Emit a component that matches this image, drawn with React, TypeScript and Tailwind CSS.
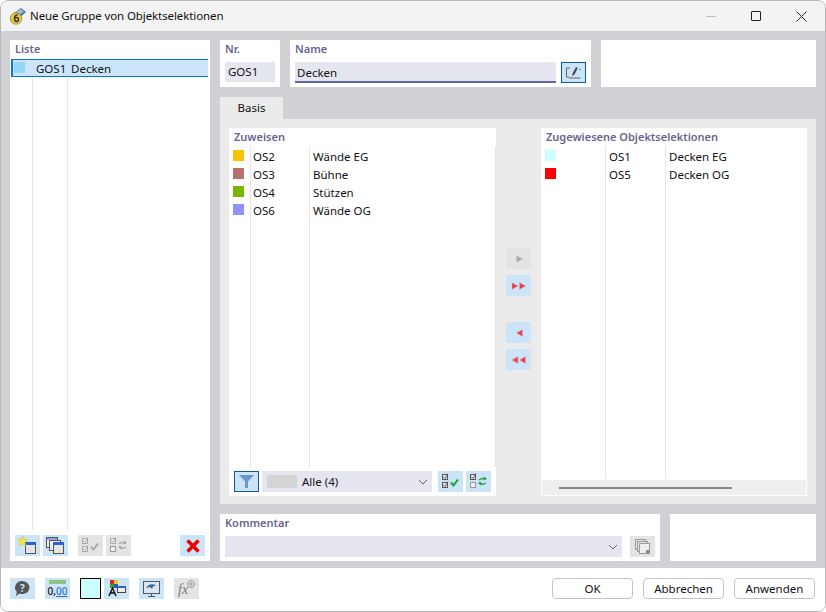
import { ReactNode } from "react";

const font = { fontFamily: '"Noto Sans", "Open Sans", sans-serif' };

function Label({ children }: { children: ReactNode }) {
  return <div className="h-[18px] pl-[5px] text-[11px] leading-[18px] font-semibold text-[#66668f]">{children}</div>;
}

function IconButton({ children, off, ring }: { children: ReactNode; off?: boolean; ring?: boolean }) {
  return (
    <div
      className={`flex h-[21px] w-[25px] shrink-0 items-center justify-center ${off ? "bg-[#e4e4e4]" : "bg-[#cbe4f8]"} ${ring ? "border border-[#0b5a9e]" : ""}`}
    >
      {children}
    </div>
  );
}

function Chevron() {
  return (
    <svg width="10" height="6" viewBox="0 0 10 6" className="shrink-0">
      <path d="M1 1l4 4 4-4" fill="none" stroke="#666" strokeWidth="1" />
    </svg>
  );
}

function WinIcon({ star, stack }: { star?: boolean; stack?: boolean }) {
  return (
    <svg width="21" height="19" viewBox="0 0 21 19">
      {stack && <rect x="1.500" y="1.500" width="11" height="10" fill="#eee" stroke="#555" />}
      {stack && <rect x="2" y="2" width="10" height="2" fill="#8fa8e0" />}
      {stack && <rect x="4.500" y="4.500" width="11" height="10" fill="#eee" stroke="#555" />}
      <rect x="8.500" y="6.500" width="10" height="11" fill="#e4e4e4" stroke="#555" />
      <rect x="8" y="6" width="11" height="3" fill="#2f5fd0" />
      {star && <path d="M5.500 0l1.500 3.400 3.700.3-2.800 2.400.9 3.600-3.300-2-3.300 2 .9-3.600L.300 3.700 4 3.400z" fill="#f5e83a" stroke="#c8b820" strokeWidth=".5" />}
    </svg>
  );
}

function CheckAll({ off }: { off?: boolean }) {
  const c = off ? "#aaa" : "#555";
  return (
    <svg width="21" height="19" viewBox="0 0 21 19">
      <rect x="2.500" y="2.500" width="5" height="5" fill="#f0f0f0" stroke={c} />
      <rect x="2.500" y="10.500" width="5" height="5" fill="#f0f0f0" stroke={c} />
      <path d="M3 4.500l2 2 3-5M3 12.500l2 2 3-5" fill="none" stroke={c} />
      <path d="M11 10.500l2.500 3 4.500-6" fill="none" stroke={off ? "#aaa" : "#13a538"} strokeWidth="2" />
    </svg>
  );
}

function CheckSwap({ off }: { off?: boolean }) {
  const c = off ? "#aaa" : "#555";
  const a = off ? "#aaa" : "#2aa53c";
  return (
    <svg width="21" height="19" viewBox="0 0 21 19">
      <rect x="2.500" y="2.500" width="5" height="5" fill="#f0f0f0" stroke={c} />
      <path d="M3 4.500l2 2 3-5" fill="none" stroke={c} />
      <rect x="2.500" y="10.500" width="5" height="5" fill="#f0f0f0" stroke="#999" />
      <path d="M11 8c2-2 4-2 7-1M18 11c-2 1.500-5 1.500-7 0" fill="none" stroke={a} strokeWidth="1.500" />
      <path d="M16 4.500l3 2.500-3.500 1.500zM13 13.500l-3-2.500 3.500-1.500z" fill={a} />
    </svg>
  );
}

function Arrows({ dir, n, off }: { dir: "r" | "l"; n: 1 | 2; off?: boolean }) {
  const col = off ? "#a8a8a8" : "#d9444f";
  const edge = off ? "#c4c4c4" : "#f2a6ac";
  const one = dir === "r" ? "M0.500 0.500l6 3.500-6 3.500z" : "M6.500 0.500L0.500 4l6 3.500z";
  return (
    <svg width="16" height="8" viewBox="0 0 16 8">
      {n === 1 ? (
        <path d={one} fill={col} stroke={edge} strokeWidth=".5" transform="translate(5 0)" />
      ) : (
        <>
          <path d={one} fill={col} stroke={edge} strokeWidth=".5" transform="translate(0.500 0)" />
          <path d={one} fill={col} stroke={edge} strokeWidth=".5" transform="translate(8 0)" />
        </>
      )}
    </svg>
  );
}

function Lines({ a, b }: { a: string; b: string }) {
  return (
    <>
      <div className={`pointer-events-none absolute top-0 bottom-0 w-px bg-[#e6e6e6] ${a}`} />
      <div className={`pointer-events-none absolute top-0 bottom-0 w-px bg-[#e6e6e6] ${b}`} />
    </>
  );
}

const toAssign = [
  ["#f8c400", "OS2", "Wände EG"],
  ["#b87070", "OS3", "Bühne"],
  ["#78b400", "OS4", "Stützen"],
  ["#9090ff", "OS6", "Wände OG"],
];

const assigned = [
  ["#ccffff", "OS1", "Decken EG"],
  ["#ff0000", "OS5", "Decken OG"],
];

export default function App() {
  return (
    <div style={font} className="h-[612px] w-[826px] overflow-hidden bg-white text-[11.5px] text-[#111]">
      <div className="flex h-full flex-col overflow-hidden rounded-lg border border-[#b8b8b8]">
        {/* title bar */}
        <div className="flex h-[30px] shrink-0 items-center bg-[#f3f3f3] pl-[8px]">
          <svg width="18" height="18" viewBox="0 0 18 18">
            <path d="M4 7l8-6 5 4-7 6z" fill="#3d6f9e" />
            <path d="M7 5l5-3 3 3-5 3z" fill="#9fc0d8" />
            <circle cx="7" cy="11.500" r="5.800" fill="#e8c53a" stroke="#8a7420" strokeWidth=".6" />
            <path d="M9 8c-2-.8-3.500 1-3.500 3.500 0 2 1 3 2 3s2-1 2-2-1-2-2-2-2 .5-2 1.500" fill="none" stroke="#333" strokeWidth="1.300" />
          </svg>
          <div className="ml-[3px] text-[11.5px] tracking-[-0.1px]">Neue Gruppe von Objektselektionen</div>
          <div className="ml-auto flex items-center">
            <div className="h-px w-[10px] bg-[#bdbdbd]" />
            <div className="ml-[35px] h-[10px] w-[10px] rounded-[1px] border border-[#222]" />
            <svg width="11" height="11" viewBox="0 0 11 11" className="mr-[18px] ml-[35px]">
              <path d="M.5.500l10 10M10.500.500l-10 10" stroke="#222" strokeWidth="1" />
            </svg>
          </div>
        </div>

        {/* body */}
        <div className="flex min-h-0 flex-1 gap-[10px] bg-[#d0d0d5] pt-[9px] pr-[9px] pb-[7px] pl-[9px]">
          {/* list */}
          <div className="flex w-[200px] shrink-0 flex-col bg-white">
            <Label>Liste</Label>
            <div className="relative mx-px min-h-0 flex-1 pt-px">
              <Lines a="left-[21px]" b="left-[56px]" />
              <div className="relative mr-px flex h-[18px] items-center border-y border-l-2 border-[#0a78d2] bg-[#cbe6fb] pt-px">
                <div className="ml-[1px] h-[11px] w-[11px] -translate-y-[1px] bg-[#93d6f8]" />
                <div className="ml-[11px] w-[35px]">GOS1</div>
                <div>Decken</div>
              </div>
            </div>
            <div className="flex h-[31px] items-start px-[5px] pt-[5px]">
              <IconButton><WinIcon star /></IconButton>
              <div className="ml-[3px]"><IconButton><WinIcon stack /></IconButton></div>
              <div className="ml-[10px]"><IconButton off><CheckAll off /></IconButton></div>
              <div className="ml-[3px]"><IconButton off><CheckSwap off /></IconButton></div>
              <div className="ml-auto">
                <IconButton>
                  <svg width="14" height="14" viewBox="0 0 14 14">
                    <path d="M1.500 1.500l11 11M12.500 1.500l-11 11" stroke="#f00000" strokeWidth="3.500" />
                  </svg>
                </IconButton>
              </div>
            </div>
          </div>

          {/* right side */}
          <div className="flex min-w-0 flex-1 flex-col">
            <div className="flex h-[47px] shrink-0 gap-[10px]">
              <div className="w-[60px] bg-white">
                <Label>Nr.</Label>
                <div className="mx-[5px] mt-[4px] flex h-[20px] items-center bg-[#e6e6f0] pl-[3px]">GOS1</div>
              </div>
              <div className="w-[301px] bg-white">
                <Label>Name</Label>
                <div className="mt-[4px] flex gap-[5px] px-[5px]">
                  <div className="flex h-[21px] w-[261px] items-center border-b-2 border-[#6464a8] bg-[#e6e6f0] pt-[2px] pl-[2px]">Decken</div>
                  <IconButton ring>
                    <svg width="17" height="15" viewBox="0 0 17 15">
                      <path d="M5 3H1.500v9H4M15.500 13H4M14 4.500h1.500" fill="none" stroke="#666" />
                      <path d="M7 11l.6-2.500L11 2l1.800.9-3.400 6.500z" fill="#444" />
                    </svg>
                  </IconButton>
                </div>
              </div>
              <div className="flex-1 bg-white" />
            </div>

            <div className="mt-[10px] flex h-[22px] shrink-0">
              <div className="flex w-[63px] items-center justify-center bg-[#ebebeb]">Basis</div>
            </div>

            {/* tab page */}
            <div className="flex h-[385px] shrink-0 bg-[#ebebeb] pt-[9px] pr-[9px] pb-[8px] pl-[9px]">
              <div className="flex w-[267px] flex-col bg-white">
                <Label>Zuweisen</Label>
                <div className="relative min-h-0 flex-1 pt-[2px]">
                  <Lines a="left-[21px]" b="left-[80px]" />
                  <div className="absolute top-0 right-0 bottom-0 w-px bg-[#e6e6e6]" />
                  {toAssign.map(([color, id, name]) => (
                    <div key={id} className="flex h-[18px] items-center pl-[4px]">
                      <div className="h-[11px] w-[11px] -translate-y-[2px]" style={{ backgroundColor: color }} />
                      <div className="ml-[9px] w-[60px]">{id}</div>
                      <div>{name}</div>
                    </div>
                  ))}
                </div>
                <div className="flex h-[29px] shrink-0 items-start gap-[3px] bg-white pt-[4px] pl-[5px]">
                  <IconButton ring>
                    <svg width="15" height="13" viewBox="0 0 15 13">
                      <path d="M0 0h15L9 6.500V13H6V6.500z" fill="#7097cc" />
                    </svg>
                  </IconButton>
                  <div className="flex h-[21px] w-[170px] items-center bg-[#e6e6f0] pr-[4px] pl-[5px]">
                    <div className="h-[13px] w-[30px] bg-[#d4d4d4]" />
                    <div className="ml-[5px] flex-1">Alle (4)</div>
                    <Chevron />
                  </div>
                  <div className="ml-[3px]"><IconButton><CheckAll /></IconButton></div>
                  <IconButton><CheckSwap /></IconButton>
                </div>
              </div>

              {/* transfer buttons */}
              <div className="flex w-[45px] shrink-0 flex-col items-center pt-[120px]">
                <IconButton off><Arrows dir="r" n={1} off /></IconButton>
                <div className="mt-[6px]"><IconButton><Arrows dir="r" n={2} /></IconButton></div>
                <div className="mt-[26px]"><IconButton><Arrows dir="l" n={1} /></IconButton></div>
                <div className="mt-[6px]"><IconButton><Arrows dir="l" n={2} /></IconButton></div>
              </div>

              <div className="flex w-[266px] flex-col bg-white">
                <Label>Zugewiesene Objektselektionen</Label>
                <div className="relative min-h-0 flex-1 pt-[2px]">
                  <Lines a="left-[64px]" b="left-[124px]" />
                  {assigned.map(([color, id, name]) => (
                    <div key={id} className="flex h-[18px] items-center pl-[4px]">
                      <div className="h-[11px] w-[11px] -translate-y-[2px]" style={{ backgroundColor: color }} />
                      <div className="ml-[53px] w-[60px]">{id}</div>
                      <div>{name}</div>
                    </div>
                  ))}
                </div>
                <div className="flex h-[17px] shrink-0 items-center border border-white bg-[#efefef] pl-[17px]">
                  <div className="h-[2px] w-[173px] bg-[#888]" />
                </div>
              </div>
            </div>

            {/* comment row */}
            <div className="mt-[10px] flex min-h-0 flex-1 gap-[10px]">
              <div className="w-[440px] bg-white">
                <Label>Kommentar</Label>
                <div className="mt-[4px] flex items-center gap-[8px] pl-[5px]">
                  <div className="flex h-[21px] w-[397px] items-center justify-end bg-[#e6e6f0] pr-[4px]">
                    <Chevron />
                  </div>
                  <IconButton off>
                    <svg width="17" height="17" viewBox="0 0 17 17">
                      <rect x="1.500" y="1.500" width="10" height="10" fill="none" stroke="#999" />
                      <rect x="3.500" y="3.500" width="10" height="10" fill="#e4e4e4" stroke="#999" />
                      <rect x="5.500" y="5.500" width="10" height="10" fill="#eee" stroke="#999" />
                      <rect x="12" y="12" width="3" height="3" fill="#888" />
                    </svg>
                  </IconButton>
                </div>
              </div>
              <div className="flex-1 bg-white" />
            </div>
          </div>
        </div>

        {/* footer */}
        <div className="flex h-[43px] shrink-0 items-start bg-white pt-[10px] pl-[9px]">
          <IconButton>
            <svg width="17" height="17" viewBox="0 0 17 17">
              <path d="M8.500 1a7 6.500 0 1 1-3 12.400L2 16l.8-4.200A7 6.500 0 0 1 8.500 1z" fill="#555" />
              <text x="8.500" y="11.500" textAnchor="middle" fontSize="10" fontWeight="700" fill="#cbe4f8">?</text>
            </svg>
          </IconButton>
          <div className="ml-[10px]">
            <IconButton>
              <div className="flex flex-col items-center">
                <div className="h-[4px] w-[17px] bg-[#8fc47a]" />
                <div className="text-[10px] leading-[14px] font-medium">0,<span className="text-[#2f6fd0] underline">00</span></div>
              </div>
            </IconButton>
          </div>
          <div className="ml-[10px] h-[21px] w-[21px] border border-black bg-[#ccffff]" />
          <div className="ml-[3px]">
            <IconButton>
              <svg width="21" height="19" viewBox="0 0 21 19">
                <rect x="4" y="1" width="4" height="4" fill="#e02020" />
                <rect x="8" y="1" width="4" height="4" fill="#e8d020" />
                <rect x="4" y="5" width="4" height="4" fill="#30a030" />
                <rect x="8" y="5" width="4" height="4" fill="#3050d0" />
                <path d="M3 17l3.500-8L10 17M4.500 14h4" fill="none" stroke="#111" strokeWidth="1.500" />
                <rect x="11.500" y="7.500" width="8" height="6" fill="#eee" stroke="#444" />
                <rect x="11" y="7" width="9" height="2" fill="#2f5fd0" />
              </svg>
            </IconButton>
          </div>
          <div className="ml-[10px]">
            <IconButton>
              <svg width="19" height="18" viewBox="0 0 19 18">
                <rect x="1.500" y="1.500" width="16" height="12" fill="#dbe6ee" stroke="#556" />
                <path d="M4 8c2-4 7-5 11-2-3-1-4 0-5 3-1-2-3-2-6-1z" fill="#3d6f9e" />
                <path d="M9.500 14v2M6 16.500h7" stroke="#556" />
              </svg>
            </IconButton>
          </div>
          <div className="ml-[10px]">
            <IconButton off>
              <svg width="20" height="19" viewBox="0 0 20 19">
                <text x="1" y="15" fontSize="14" fontStyle="italic" fontFamily="Liberation Serif, serif" fill="#777">fx</text>
                <circle cx="14" cy="5" r="3.500" fill="none" stroke="#999" />
                <path d="M14 3v4M12 5h4" stroke="#999" />
              </svg>
            </IconButton>
          </div>
          <div className="ml-auto flex gap-[10px] pr-[10px]">
            {["OK", "Abbrechen", "Anwenden"].map((t) => (
              <div key={t} className="flex h-[21px] w-[81px] items-center justify-center rounded-[4px] border border-[#c4c4c4] bg-white">
                {t}
              </div>
            ))}
          </div>
        </div>
      </div>
    </div>
  );
}
